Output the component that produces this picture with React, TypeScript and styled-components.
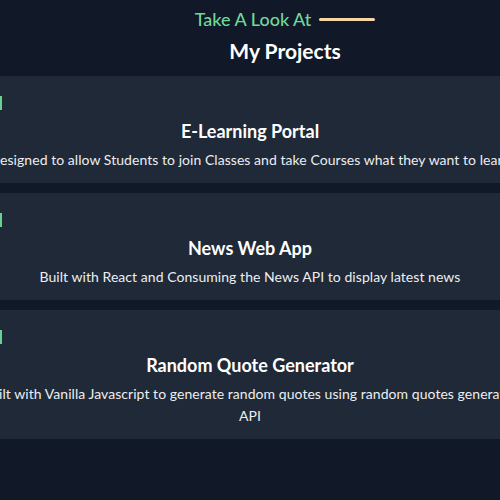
import React from "react";
import styled, { createGlobalStyle } from "styled-components";

const Global = createGlobalStyle`
  html, body { margin: 0; padding: 0; background: #111827; }
  body { overflow: hidden; font-family: Lato, "Open Sans", sans-serif; }
`;

const Page = styled.div`
  width: 500px;
  height: 500px;
  background: #111827;
  display: flex;
  flex-direction: column;
  align-items: center;
  overflow: hidden;
`;

const Header = styled.header`
  display: flex;
  flex-direction: column;
  align-items: center;
  padding: 6px 0 0 70px;
`;

const Eyebrow = styled.div`
  display: flex;
  align-items: center;
  gap: 8px;
  color: #6fd99a;
  font-size: 18px;
  font-weight: 500;
  line-height: 26px;
`;

const Rule = styled.span`
  width: 56px;
  height: 3px;
  border-radius: 2px;
  background: #f6d7a3;
`;

const Title = styled.h1`
  margin: 4px 0 0;
  color: #ffffff;
  font-size: 21px;
  font-weight: 700;
  line-height: 30px;
`;

const List = styled.div`
  margin-top: 10px;
  display: flex;
  flex-direction: column;
  align-items: center;
  gap: 10px;
`;

const Card = styled.article`
  width: 560px;
  box-sizing: border-box;
  background: #1f2937;
  padding: 20px 0 12px;
  display: flex;
  flex-direction: column;
  align-items: center;
  text-align: center;
`;

const Tag = styled.div`
  align-self: flex-start;
  margin-left: 18px;
  width: 14px;
  height: 14px;
  border-right: 2px solid #68d391;
  box-sizing: border-box;
`;

const CardTitle = styled.h2`
  margin: 7px 0 0;
  color: #ffffff;
  font-size: 18px;
  font-weight: 700;
  line-height: 28px;
`;

const Desc = styled.p`
  margin: 4px 0 0;
  color: #eceef1;
  font-size: 14px;
  letter-spacing: 0.05px;
  line-height: 22px;
`;

const projects = [
  {
    title: "E-Learning Portal",
    desc: "Designed to allow Students to join Classes and take Courses what they want to learn",
  },
  {
    title: "News Web App",
    desc: "Built with React and Consuming the News API to display latest news",
  },
  {
    title: "Random Quote Generator",
    desc: "Built with Vanilla Javascript to generate random quotes using random quotes generator API",
  },
];

export default function App() {
  return (
    <Page>
      <Global />
      <Header>
        <Eyebrow>
          Take A Look At <Rule />
        </Eyebrow>
        <Title>My Projects</Title>
      </Header>
      <List>
        {projects.map((p) => (
          <Card key={p.title}>
            <Tag />
            <CardTitle>{p.title}</CardTitle>
            <Desc>{p.desc}</Desc>
          </Card>
        ))}
      </List>
    </Page>
  );
}
